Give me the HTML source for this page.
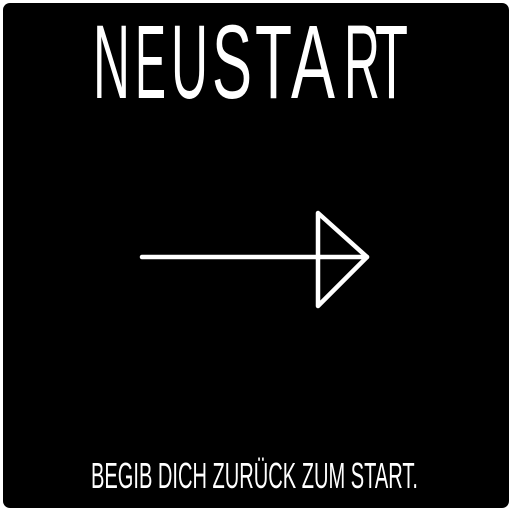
<!DOCTYPE html>
<html><head><meta charset="utf-8"><style>
html,body{margin:0;padding:0;background:#fff;width:512px;height:512px;overflow:hidden}
</style></head><body>
<svg width="512" height="512" viewBox="0 0 512 512" xmlns="http://www.w3.org/2000/svg">
<rect x="3" y="3" width="506" height="505" rx="7" fill="#000"/>
<g font-family="Liberation Sans, sans-serif" font-size="105" fill="#fff">
<text x="93" y="98" textLength="37" lengthAdjust="spacingAndGlyphs">N</text>
<text x="135" y="98" textLength="31" lengthAdjust="spacingAndGlyphs">E</text>
<text x="171" y="98" textLength="37" lengthAdjust="spacingAndGlyphs">U</text>
<text x="212" y="98" textLength="40" lengthAdjust="spacingAndGlyphs">S</text>
<text x="255" y="98" textLength="37" lengthAdjust="spacingAndGlyphs">T</text>
<text x="291" y="98" textLength="44" lengthAdjust="spacingAndGlyphs">A</text>
<text x="344" y="98" textLength="36" lengthAdjust="spacingAndGlyphs">R</text>
<text x="375" y="98" textLength="33" lengthAdjust="spacingAndGlyphs">T</text>
</g>
<g stroke="#fff" stroke-width="4.5" fill="none" stroke-linecap="round" stroke-linejoin="round">
<line x1="142" y1="257" x2="367" y2="257"/>
<path d="M318 213 L318 306 L367 257 Z"/>
</g>
<text x="91" y="488" font-family="Liberation Sans, sans-serif" font-size="36" fill="#fff" textLength="327" lengthAdjust="spacingAndGlyphs">BEGIB DICH ZURÜCK ZUM START.</text>
</svg>
</body></html>
